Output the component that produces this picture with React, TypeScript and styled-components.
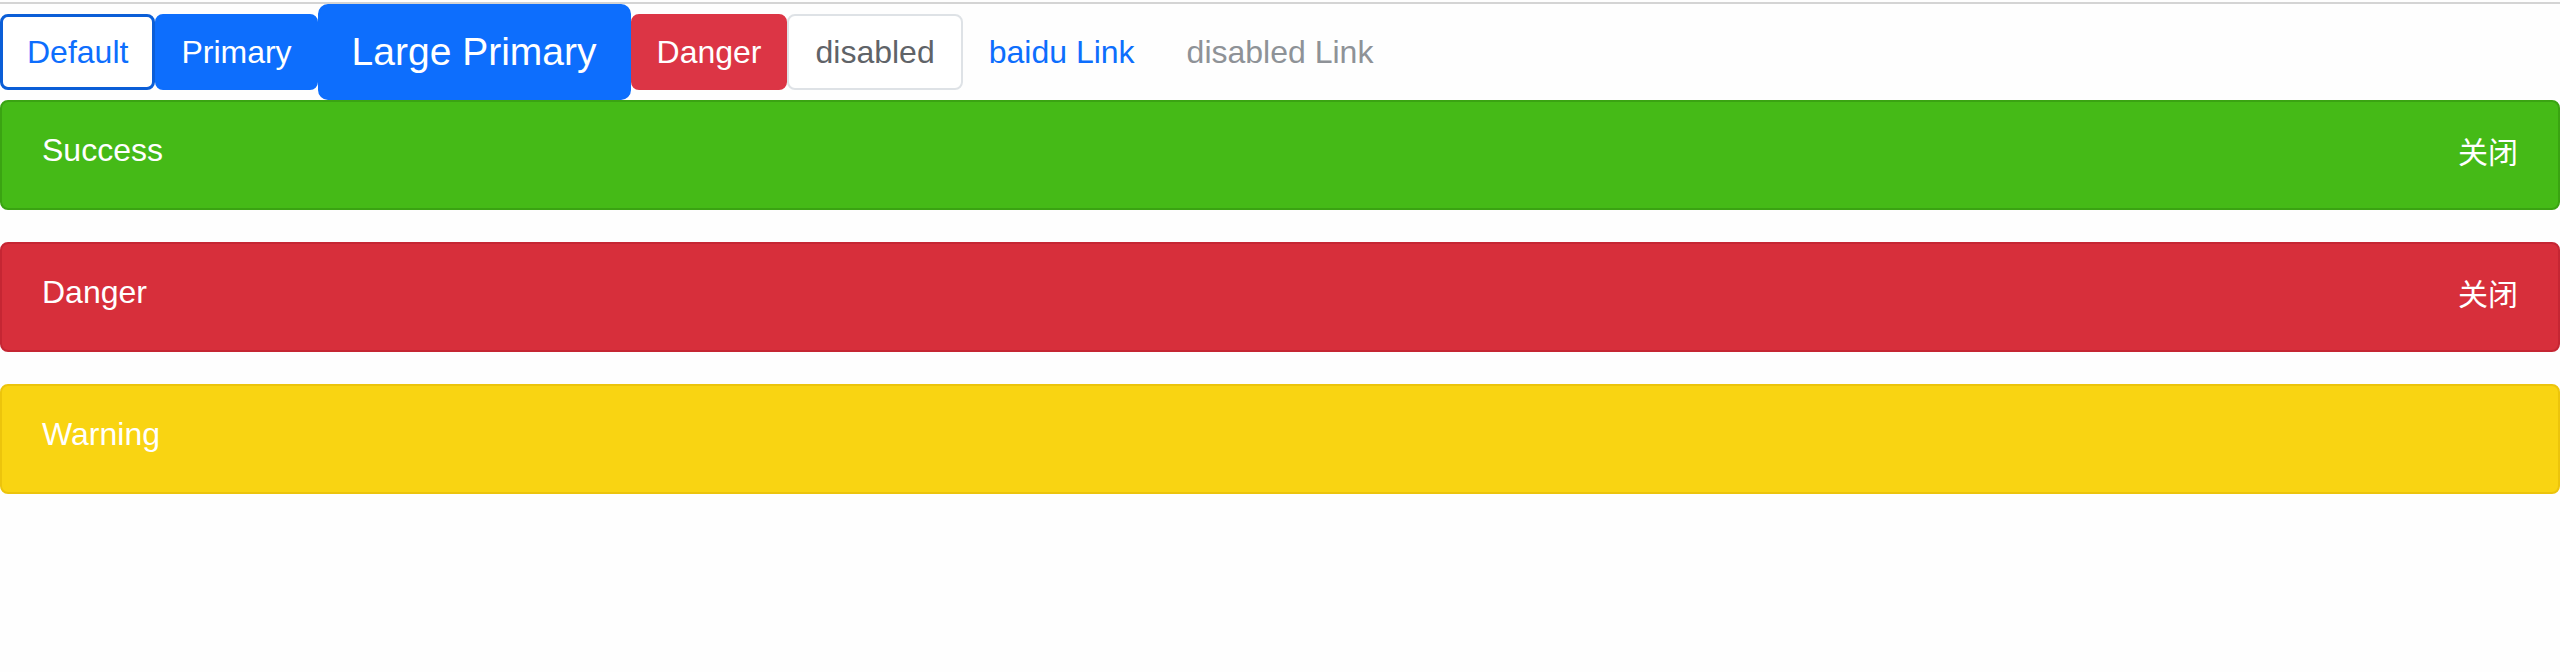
import styled, { createGlobalStyle, css } from "styled-components";

const GlobalStyle = createGlobalStyle`
  body {
    margin: 0;
    background: #fefefe;
    font-family: "Liberation Sans", Arial, sans-serif;
  }
`;

const Page = styled.main`
  margin-top: 2px;
  border-top: 2px solid #d4d4d4;
`;

const ButtonRow = styled.div`
  display: flex;
  align-items: center;
`;

type BtnType = "default" | "primary" | "danger" | "link";

const Button = styled.button<{ $type?: BtnType; $size?: "lg" }>`
  font-family: inherit;
  font-size: 32px;
  line-height: 48px;
  padding: 12px 24px;
  border: 2px solid transparent;
  border-radius: 8px;
  background: #fff;
  color: #212529;
  cursor: pointer;

  ${(p) =>
    p.$type === "default" &&
    css`
      border: 3px solid #0b5ed7;
      padding: 11px 24px;
      color: #0d6efd;
    `}
  ${(p) =>
    p.$type === "primary" &&
    css`
      background: #0d6efd;
      border-color: #0d6efd;
      color: #fff;
    `}
  ${(p) =>
    p.$type === "danger" &&
    css`
      background: #dc3545;
      border-color: #dc3545;
      color: #fff;
    `}
  ${(p) =>
    p.$type === "link" &&
    css`
      background: transparent;
      color: #0d6efd;
    `}
  ${(p) =>
    p.$size === "lg" &&
    css`
      font-size: 39px;
      line-height: 60px;
      padding: 16px 32px;
      border-radius: 10px;
    `}

  &:disabled {
    cursor: not-allowed;
    padding: 12px 26px;
    color: #5f6368;
    border-color: #dee2e6;
  }
`;

const LinkButton = styled(Button).attrs({ as: "a" })<{ $disabled?: boolean }>`
  text-decoration: none;
  ${(p) =>
    p.$disabled &&
    css`
      color: #8e9297;
      cursor: not-allowed;
    `}
`;

type AlertType = "success" | "danger" | "warning";

const alertColors: Record<AlertType, { bg: string; border: string }> = {
  success: { bg: "#45ba17", border: "#3aa312" },
  danger: { bg: "#d72f3b", border: "#c52633" },
  warning: { bg: "#f9d412", border: "#ecc40c" },
};

const Alert = styled.div<{ $type: AlertType }>`
  display: flex;
  justify-content: space-between;
  align-items: center;
  padding: 27px 40px 37px;
  margin-bottom: 32px;
  border: 2px solid ${(p) => alertColors[p.$type].border};
  border-radius: 8px;
  background: ${(p) => alertColors[p.$type].bg};
  color: #fff;
`;

const AlertTitle = styled.span`
  font-size: 32px;
  line-height: 42px;
`;

const CloseText = styled.span`
  font-family: "Noto Sans CJK SC", sans-serif;
  font-size: 30px;
  line-height: 42px;
  cursor: pointer;
`;

export default function App() {
  return (
    <Page>
      <GlobalStyle />
      <ButtonRow>
        <Button $type="default">Default</Button>
        <Button $type="primary">Primary</Button>
        <Button $type="primary" $size="lg">
          Large Primary
        </Button>
        <Button $type="danger">Danger</Button>
        <Button disabled>disabled</Button>
        <LinkButton $type="link" href="#">
          baidu Link
        </LinkButton>
        <LinkButton $type="link" $disabled>
          disabled Link
        </LinkButton>
      </ButtonRow>
      <Alert $type="success">
        <AlertTitle>Success</AlertTitle>
        <CloseText>关闭</CloseText>
      </Alert>
      <Alert $type="danger">
        <AlertTitle>Danger</AlertTitle>
        <CloseText>关闭</CloseText>
      </Alert>
      <Alert $type="warning">
        <AlertTitle>Warning</AlertTitle>
      </Alert>
    </Page>
  );
}
